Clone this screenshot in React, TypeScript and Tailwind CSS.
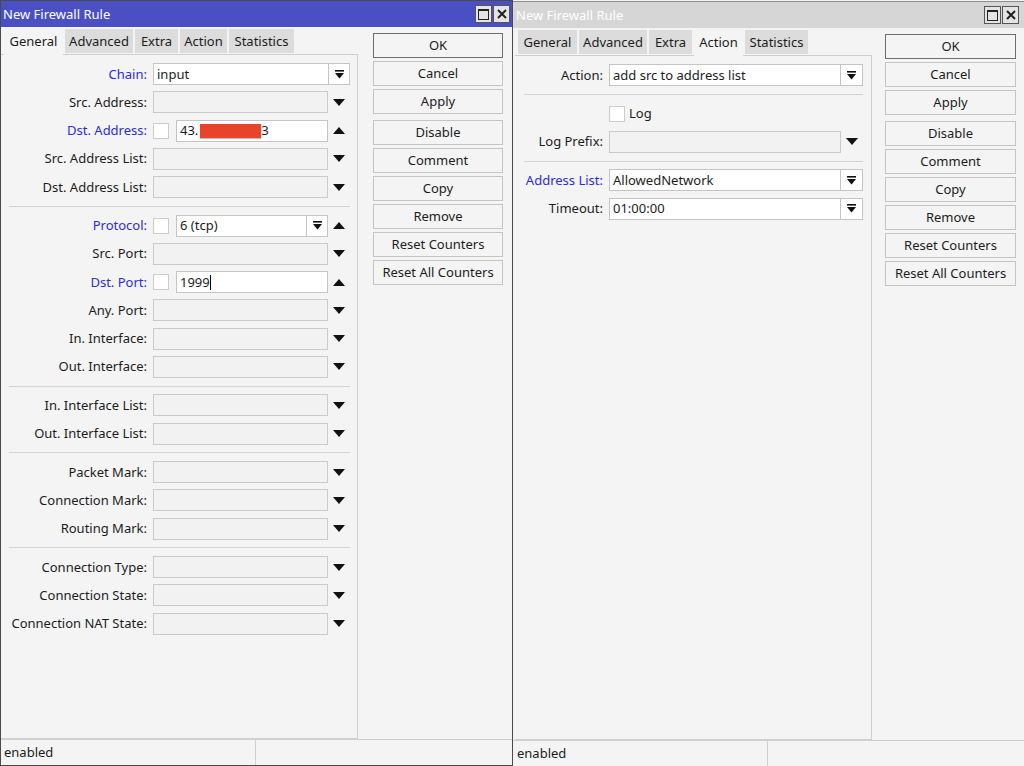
import React from 'react';

const LEFT_TABS = [
  { name: 'General', w: 'w-[59px]' },
  { name: 'Advanced', w: 'w-[68px]' },
  { name: 'Extra', w: 'w-[43px]' },
  { name: 'Action', w: 'w-[47px]' },
  { name: 'Statistics', w: 'w-[65px]' },
];

const RIGHT_TABS = [
  { name: 'General', w: 'w-[59px]' },
  { name: 'Advanced', w: 'w-[68px]' },
  { name: 'Extra', w: 'w-[43px]' },
  { name: 'Action', w: 'w-[49px]' },
  { name: 'Statistics', w: 'w-[63px]' },
];

const BUTTONS = ['OK', 'Cancel', 'Apply', 'Disable', 'Comment', 'Copy', 'Remove', 'Reset Counters', 'Reset All Counters'];

function TriDown() {
  return (
    <svg width="12" height="7" viewBox="0 0 12 7" className="shrink-0">
      <path d="M0 0h12L6 7z" fill="#111" />
    </svg>
  );
}

function TriUp() {
  return (
    <svg width="12" height="7" viewBox="0 0 12 7" className="shrink-0">
      <path d="M0 7h12L6 0z" fill="#111" />
    </svg>
  );
}

function DropBtn({ w = 'w-[22px]' }: { w?: string }) {
  return (
    <div className={`-ml-px flex h-[22px] ${w} items-center justify-center border border-[#c4c4c4] bg-white`}>
      <svg width="9" height="9" viewBox="0 0 9 9">
        <rect x="0" y="0" width="9" height="1.6" fill="#111" />
        <path d="M0 3h9L4.5 8.5z" fill="#111" />
      </svg>
    </div>
  );
}

function Input({ w, children }: { w: string; children?: React.ReactNode }) {
  return (
    <div className={`flex h-[22px] ${w} items-center border border-[#c4c4c4] bg-white pl-[3px] whitespace-nowrap`}>
      {children}
    </div>
  );
}

function Empty({ w }: { w: string }) {
  return <div className={`h-[22px] ${w} border border-[#cacaca] bg-[#f2f2f2]`} />;
}

function Check() {
  return <div className="h-[16px] w-[16px] shrink-0 border border-[#cccccc] bg-white" />;
}

function Row({ label, blue, right, children }: { label: string; blue?: boolean; right?: boolean; children?: React.ReactNode }) {
  return (
    <div className="flex h-[28.25px] items-center">
      <div className={`${right ? 'w-[88px]' : 'w-[146px]'} shrink-0 text-right whitespace-nowrap ${blue ? 'text-[#2b2be0]' : 'text-[#1c1c1c]'}`}>
        {label}
      </div>
      <div className="ml-[6px] flex items-center">{children}</div>
    </div>
  );
}

function Sep({ right }: { right?: boolean }) {
  return (
    <div className={`flex h-[10.25px] items-center ${right ? 'pl-[9px] pr-[8px]' : 'pl-[8px] pr-[7px]'}`}>
      <div className="h-px w-full bg-[#d2d2d2]" />
    </div>
  );
}

function EmptyRow({ label }: { label: string }) {
  return (
    <Row label={label}>
      <Empty w="w-[175px]" />
      <div className="ml-[5px]">
        <TriDown />
      </div>
    </Row>
  );
}

function TitleBar({ active }: { active?: boolean }) {
  return (
    <div className={`flex h-[26px] items-center justify-between ${active ? 'bg-[#4a4fc3] pl-[2px] pr-[2px]' : 'bg-[#d6d6d6] pl-[3px] pr-[5px]'}`}>
      <span className="text-[13px] text-white">New Firewall Rule</span>
      <div className="flex gap-[1px]">
        <div className="flex h-[18px] w-[17px] items-center justify-center border border-[#555] bg-[#e4e4e4]">
          <div className="h-[11px] w-[11px] border border-t-2 border-[#222]" />
        </div>
        <div className="flex h-[18px] w-[17px] items-center justify-center border border-[#555] bg-[#e4e4e4]">
          <svg width="10" height="10" viewBox="0 0 10 10">
            <path d="M1 1L9 9M9 1L1 9" stroke="#222" strokeWidth="2" />
          </svg>
        </div>
      </div>
    </div>
  );
}

function Tabs({ tabs, active }: { tabs: { name: string; w: string }[]; active: string }) {
  return (
    <div className="flex h-[27px] items-end gap-[2px] pl-[3px]">
      {tabs.map((t) =>
        t.name === active ? (
          <div key={t.name} className={`relative z-10 -mb-px flex h-[28px] ${t.w} items-center justify-center bg-[#f4f4f4]`}>
            {t.name}
          </div>
        ) : (
          <div key={t.name} className={`mb-px flex h-[24px] ${t.w} items-center justify-center bg-[#dcdcdc]`}>
            {t.name}
          </div>
        )
      )}
    </div>
  );
}

function ButtonCol({ ml, w }: { ml: string; w: string }) {
  return (
    <div className={`${ml} ${w} flex flex-col gap-[3px] pt-[6px]`}>
      {BUTTONS.map((b) => (
        <div
          key={b}
          className={`flex h-[25px] items-center justify-center border bg-[#f4f4f4] ${b === 'OK' ? 'border-[#6e6e6e]' : 'border-[#c4c4c4]'} ${b === 'Disable' ? 'mt-[3px]' : ''}`}
        >
          {b}
        </div>
      ))}
    </div>
  );
}

function StatusBar({ pl, cell }: { pl: string; cell: string }) {
  return (
    <div className="flex h-[26px] border-t border-[#d0d0d0]">
      <div className={`flex ${cell} items-center border-r border-[#d0d0d0] ${pl}`}>enabled</div>
      <div className="flex-1" />
    </div>
  );
}

function LeftWindow() {
  return (
    <div className="flex h-[766px] w-[513px] shrink-0 flex-col border border-[#4a4a4a]">
      <TitleBar active />
      <div className="flex flex-1">
        <div className="flex w-[357px] flex-col">
          <Tabs tabs={LEFT_TABS} active="General" />
          <div className="flex-1 border-t border-r border-b border-[#cfcfcf] pt-[5px]">
            <Row label="Chain:" blue>
              <Input w="w-[176px]">input</Input>
              <DropBtn />
            </Row>
            <EmptyRow label="Src. Address:" />
            <Row label="Dst. Address:" blue>
              <Check />
              <div className="ml-[7px]">
                <Input w="w-[152px]">
                  43.<span className="ml-[2px] inline-block h-[14px] w-[61px] bg-[#e8442b] shadow-[0_1px_1px_rgba(0,0,0,0.25)]" />3
                </Input>
              </div>
              <div className="ml-[5px]">
                <TriUp />
              </div>
            </Row>
            <EmptyRow label="Src. Address List:" />
            <EmptyRow label="Dst. Address List:" />
            <Sep />
            <Row label="Protocol:" blue>
              <Check />
              <div className="ml-[7px] flex">
                <Input w="w-[131px]">6 (tcp)</Input>
                <DropBtn />
              </div>
              <div className="ml-[5px]">
                <TriUp />
              </div>
            </Row>
            <EmptyRow label="Src. Port:" />
            <Row label="Dst. Port:" blue>
              <Check />
              <div className="ml-[7px]">
                <Input w="w-[152px]">
                  1999<span className="inline-block h-[15px] w-px bg-black" />
                </Input>
              </div>
              <div className="ml-[5px]">
                <TriUp />
              </div>
            </Row>
            <EmptyRow label="Any. Port:" />
            <EmptyRow label="In. Interface:" />
            <EmptyRow label="Out. Interface:" />
            <Sep />
            <EmptyRow label="In. Interface List:" />
            <EmptyRow label="Out. Interface List:" />
            <Sep />
            <EmptyRow label="Packet Mark:" />
            <EmptyRow label="Connection Mark:" />
            <EmptyRow label="Routing Mark:" />
            <Sep />
            <EmptyRow label="Connection Type:" />
            <EmptyRow label="Connection State:" />
            <EmptyRow label="Connection NAT State:" />
          </div>
        </div>
        <ButtonCol ml="ml-[15px]" w="w-[130px]" />
      </div>
      <StatusBar pl="pl-[3px]" cell="w-[255px]" />
    </div>
  );
}

function RightWindow() {
  return (
    <div className="mt-[1px] flex h-[765px] w-[511px] shrink-0 flex-col border-t border-[#8c8c8c]">
      <TitleBar />
      <div className="flex flex-1 pl-[2px]">
        <div className="flex w-[357px] flex-col">
          <Tabs tabs={RIGHT_TABS} active="Action" />
          <div className="flex-1 border-t border-r border-b border-[#cfcfcf] pt-[5px]">
            <Row label="Action:" right>
              <Input w="w-[232px]">add src to address list</Input>
              <DropBtn w="w-[23px]" />
            </Row>
            <Sep right />
            <div className="flex h-[28.25px] items-center pl-[94px]">
              <Check />
              <span className="ml-[4px]">Log</span>
            </div>
            <Row label="Log Prefix:" right>
              <Empty w="w-[232px]" />
              <div className="ml-[5px]">
                <TriDown />
              </div>
            </Row>
            <Sep right />
            <Row label="Address List:" blue right>
              <Input w="w-[232px]">AllowedNetwork</Input>
              <DropBtn w="w-[23px]" />
            </Row>
            <Row label="Timeout:" right>
              <Input w="w-[232px]">01:00:00</Input>
              <DropBtn w="w-[23px]" />
            </Row>
          </div>
        </div>
        <ButtonCol ml="ml-[13px]" w="w-[131px]" />
      </div>
      <StatusBar pl="pl-[4px]" cell="w-[255px]" />
    </div>
  );
}

export default function App() {
  return (
    <div className="flex h-[766px] w-[1024px] overflow-hidden bg-[#f4f4f4] font-['Noto_Sans',sans-serif] text-[13px] leading-none text-[#1c1c1c]">
      <LeftWindow />
      <RightWindow />
    </div>
  );
}
